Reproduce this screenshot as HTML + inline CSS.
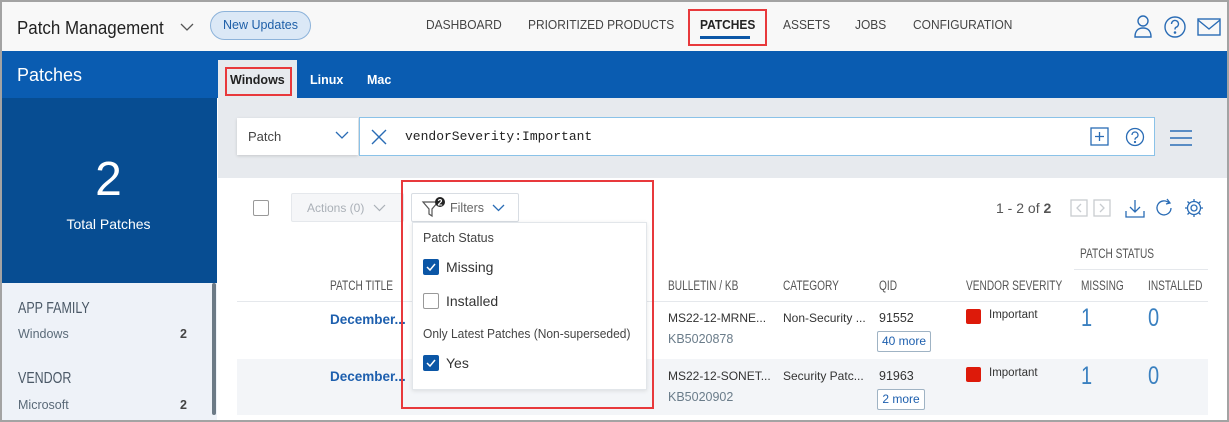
<!DOCTYPE html>
<html><head><meta charset="utf-8"><style>
*{box-sizing:border-box;margin:0;padding:0}
body{width:1229px;height:422px;overflow:hidden;font-family:"Liberation Sans",sans-serif;background:#fff;position:relative;color:#333}
.a{position:absolute}
.nav{font-size:13px;color:#444;top:17px;transform:scaleX(.92);transform-origin:left}
.red{border:2px solid #e8393c}
.cb{width:16px;height:16px;border-radius:2px}
.cbon{background:#0b56a6}
.cboff{border:1.5px solid #999;background:#fff}
.th{font-size:13.5px;color:#555;top:278px;transform:scaleX(.75);transform-origin:left}
.num{font-size:25px;color:#3a80c0;font-weight:300;transform:scaleX(.8);transform-origin:left}
</style></head><body>
<div class="a" style="inset:0;border:2px solid #a3a3a3;z-index:50;pointer-events:none"></div>
<!-- header -->
<div class="a" style="left:0;top:0;width:1229px;height:51px;background:#f8f8f8"></div>
<div class="a" style="left:17px;top:18px;font-size:18px;color:#222;transform:scaleX(.94);transform-origin:left">Patch Management</div>
<svg class="a" style="left:180px;top:23px" width="14" height="9"><path d="M1 1l6 6 6-6" fill="none" stroke="#555" stroke-width="1.3"/></svg>
<div class="a" style="left:210px;top:11px;width:101px;height:29px;border:1px solid #8db3da;border-radius:15px;background:#dbe8f6;color:#1e5fa8;font-size:12.5px;text-align:center;line-height:27px">New Updates</div>
<div class="a nav" style="left:426px">DASHBOARD</div>
<div class="a nav" style="left:528px">PRIORITIZED PRODUCTS</div>
<div class="a nav" style="left:700px;font-weight:bold;color:#222">PATCHES</div>
<div class="a" style="left:700px;top:36px;width:50px;height:3px;background:#0b56a6"></div>
<div class="a red" style="left:688px;top:9px;width:79px;height:37px"></div>
<div class="a nav" style="left:783px">ASSETS</div>
<div class="a nav" style="left:855px">JOBS</div>
<div class="a nav" style="left:913px">CONFIGURATION</div>
<svg class="a" style="left:1130px;top:14px" width="100" height="26" fill="none" stroke="#2a6cb5" stroke-width="1.4">
<circle cx="13" cy="7" r="5"/><path d="M5 23c0-6 3-9 8-9s8 3 8 9z"/>
<circle cx="45" cy="13" r="10"/><path d="M41.5 10a3.5 3.5 0 1 1 4.5 3.3c-1 .4-1 1-1 2.2"/><circle cx="45" cy="18.5" r=".6" fill="#2a6cb5"/>
<rect x="68" y="5" width="22" height="16"/><path d="M68 6l11 9 11-9"/>
</svg>
<!-- blue bar -->
<div class="a" style="left:0;top:51px;width:1229px;height:47px;background:#0a5cb1"></div>
<div class="a" style="left:17px;top:65px;font-size:18px;color:#fff">Patches</div>
<div class="a" style="left:218px;top:60px;width:79px;height:38px;background:#e7eaee"></div>
<div class="a" style="left:230px;top:73px;font-size:12.5px;font-weight:bold;color:#222">Windows</div>
<div class="a red" style="left:225px;top:67px;width:67px;height:29px"></div>
<div class="a" style="left:310px;top:73px;font-size:12.5px;font-weight:bold;color:#fff">Linux</div>
<div class="a" style="left:367px;top:73px;font-size:12.5px;font-weight:bold;color:#fff">Mac</div>
<!-- sidebar -->
<div class="a" style="left:0;top:98px;width:217px;height:185px;background:#074d92"></div>
<div class="a" style="left:0;top:152px;width:217px;text-align:center;font-size:48px;color:#fff">2</div>
<div class="a" style="left:0;top:216px;width:217px;text-align:center;font-size:14px;color:#fff">Total Patches</div>
<div class="a" style="left:0;top:283px;width:217px;height:139px;background:#eef2f8"></div>
<div class="a" style="left:212px;top:283px;width:4px;height:132px;background:#6c7a86;border-radius:2px"></div>
<div class="a" style="left:18px;top:300px;font-size:16px;color:#4a5866;transform:scaleX(.78);transform-origin:left">APP FAMILY</div>
<div class="a" style="left:18px;top:327px;font-size:12.5px;color:#5a6a78">Windows</div>
<div class="a" style="left:180px;top:327px;font-size:12.5px;color:#444;font-weight:bold">2</div>
<div class="a" style="left:18px;top:370px;font-size:16px;color:#4a5866;transform:scaleX(.78);transform-origin:left">VENDOR</div>
<div class="a" style="left:18px;top:398px;font-size:12.5px;color:#5a6a78">Microsoft</div>
<div class="a" style="left:180px;top:398px;font-size:12.5px;color:#444;font-weight:bold">2</div>
<!-- search area -->
<div class="a" style="left:218px;top:98px;width:1011px;height:80px;background:#e7eaee"></div>
<div class="a" style="left:237px;top:118px;width:121px;height:37px;background:#fff;box-shadow:0 1px 3px rgba(0,0,0,.15)"></div>
<div class="a" style="left:248px;top:129px;font-size:13px;color:#444">Patch</div>
<svg class="a" style="left:335px;top:131px" width="14" height="9"><path d="M1 1l6 6 6-6" fill="none" stroke="#2a6cb5" stroke-width="1.3"/></svg>
<div class="a" style="left:359px;top:117px;width:796px;height:39px;background:#fff;border:1.5px solid #8ac2e8"></div>
<svg class="a" style="left:371px;top:129px" width="16" height="16"><path d="M1 1l14 14M15 1L1 15" stroke="#2a6cb5" stroke-width="1.4"/></svg>
<div class="a" style="left:405px;top:129px;font-family:'Liberation Mono',monospace;font-size:13px;color:#222">vendorSeverity:Important</div>
<svg class="a" style="left:1090px;top:127px" width="60" height="20" fill="none" stroke="#2a6cb5" stroke-width="1.3"><rect x="1" y="1" width="17" height="17"/><path d="M9.5 5v9M5 9.5h9"/><circle cx="45" cy="10" r="8.5"/><path d="M42 8a3 3 0 1 1 4 2.8c-.8.4-1 .8-1 2"/><circle cx="45" cy="15" r=".5" fill="#2a6cb5"/></svg>
<svg class="a" style="left:1170px;top:129px" width="22" height="18"><path d="M0 2h22M0 9h22M0 16h22" stroke="#2a6cb5" stroke-width="1.4"/></svg>
<!-- toolbar -->
<div class="a cb cboff" style="left:253px;top:200px"></div>
<div class="a" style="left:291px;top:193px;width:113px;height:29px;background:#f5f6f8;border:1px solid #e5e8ec;border-radius:2px"></div>
<div class="a" style="left:307px;top:201px;font-size:12px;color:#aab0b7">Actions (0)</div>
<svg class="a" style="left:373px;top:204px" width="13" height="8"><path d="M1 1l5.5 5.5L12 1" fill="none" stroke="#aab0b7" stroke-width="1.2"/></svg>
<div class="a" style="left:411px;top:193px;width:108px;height:29px;background:#fff;border:1px solid #d8dde3;border-radius:2px"></div>
<svg class="a" style="left:421px;top:197px" width="26" height="22"><path d="M2 5h15l-6 7v7l-3-2v-5z" fill="none" stroke="#555" stroke-width="1.2"/><circle cx="19" cy="5" r="5" fill="#222"/><text x="19" y="8.5" font-size="9" font-weight="bold" fill="#fff" text-anchor="middle" font-family="Liberation Sans">2</text></svg>
<div class="a" style="left:450px;top:201px;font-size:12.5px;color:#666">Filters</div>
<svg class="a" style="left:492px;top:204px" width="13" height="8"><path d="M1 1l5.5 5.5L12 1" fill="none" stroke="#2a6cb5" stroke-width="1.3"/></svg>
<div class="a" style="left:996px;top:200px;font-size:14px;color:#555">1 - 2 of <b>2</b></div>
<svg class="a" style="left:1070px;top:197px" width="140" height="24" fill="none" stroke-width="1.3">
<rect x="1" y="3" width="16" height="16" stroke="#c8ccd0"/><path d="M11 7l-4 4 4 4" stroke="#c8ccd0"/>
<rect x="24" y="3" width="16" height="16" stroke="#c8ccd0"/><path d="M30 7l4 4-4 4" stroke="#c8ccd0"/>
<path d="M65 3v12M60 10l5 5 5-5M56 14v6h18v-6" stroke="#2a6cb5"/>
<path d="M99 6a7 7 0 1 0 2 5M97 2l3 4-4 1" stroke="#2a6cb5"/>
<circle cx="124" cy="11" r="3" stroke="#2a6cb5"/><path d="M124 2v3M124 17v3M115 11h3M130 11h3M117.5 4.5l2 2M128.5 15.5l2 2M130.5 4.5l-2 2M119.5 15.5l-2 2" stroke="#2a6cb5"/><circle cx="124" cy="11" r="6.5" stroke="#2a6cb5"/>
</svg>
<!-- table header -->
<div class="a" style="left:1080px;top:246px;font-size:13.5px;color:#555;transform:scaleX(.75);transform-origin:left">PATCH STATUS</div>
<div class="a" style="left:1074px;top:269px;width:134px;height:1px;background:#e5e8ec"></div>
<div class="a th" style="left:330px">PATCH TITLE</div>
<div class="a th" style="left:668px">BULLETIN / KB</div>
<div class="a th" style="left:783px">CATEGORY</div>
<div class="a th" style="left:879px">QID</div>
<div class="a th" style="left:966px">VENDOR SEVERITY</div>
<div class="a th" style="left:1081px">MISSING</div>
<div class="a th" style="left:1148px">INSTALLED</div>
<div class="a" style="left:237px;top:301px;width:971px;height:1px;background:#e5e8ec"></div>
<div class="a" style="left:237px;top:359px;width:971px;height:56px;background:#f3f5f8"></div>
<!-- rows -->
<div class="a" style="left:330px;top:312px;font-size:13.5px;font-weight:bold;color:#1d5fae">December...</div>
<div class="a" style="left:330px;top:369px;font-size:13.5px;font-weight:bold;color:#1d5fae">December...</div>
<div class="a" style="left:668px;top:311px;font-size:12px;color:#333">MS22-12-MRNE...</div>
<div class="a" style="left:668px;top:332px;font-size:12.5px;color:#6a7c8a">KB5020878</div>
<div class="a" style="left:668px;top:369px;font-size:12px;color:#333">MS22-12-SONET...</div>
<div class="a" style="left:668px;top:390px;font-size:12.5px;color:#6a7c8a">KB5020902</div>
<div class="a" style="left:783px;top:311px;font-size:12px;color:#333">Non-Security ...</div>
<div class="a" style="left:783px;top:369px;font-size:12px;color:#333">Security Patc...</div>
<div class="a" style="left:879px;top:311px;font-size:12.5px;color:#333">91552</div>
<div class="a" style="left:877px;top:331px;width:54px;height:21px;border:1px solid #9fb3c4;border-radius:2px;background:#fff;font-size:12px;color:#1d5fae;text-align:center;line-height:19px">40 more</div>
<div class="a" style="left:879px;top:369px;font-size:12.5px;color:#333">91963</div>
<div class="a" style="left:877px;top:389px;width:48px;height:21px;border:1px solid #9fb3c4;border-radius:2px;background:#fff;font-size:12px;color:#1d5fae;text-align:center;line-height:19px">2 more</div>
<div class="a" style="left:966px;top:309px;width:15px;height:15px;background:#dd1a0a;border-radius:2px"></div>
<div class="a" style="left:989px;top:309px;font-size:11.5px;color:#333">Important</div>
<div class="a" style="left:966px;top:367px;width:15px;height:15px;background:#dd1a0a;border-radius:2px"></div>
<div class="a" style="left:989px;top:367px;font-size:11.5px;color:#333">Important</div>
<div class="a num" style="left:1081px;top:304px">1</div>
<div class="a num" style="left:1148px;top:304px">0</div>
<div class="a num" style="left:1081px;top:362px">1</div>
<div class="a num" style="left:1148px;top:362px">0</div>
<!-- filter popup -->
<div class="a" style="left:412px;top:222px;width:235px;height:168px;background:#fff;border:1px solid #e2e6ea;box-shadow:0 1px 4px rgba(0,0,0,.1)"></div>
<div class="a" style="left:423px;top:231px;font-size:12.5px;color:#444">Patch Status</div>
<div class="a cb cbon" style="left:423px;top:259px"></div>
<svg class="a" style="left:423px;top:259px" width="16" height="16"><path d="M4 8l3 3 5-6" fill="none" stroke="#fff" stroke-width="1.5"/></svg>
<div class="a" style="left:446px;top:259px;font-size:14px;color:#333">Missing</div>
<div class="a cb cboff" style="left:423px;top:293px"></div>
<div class="a" style="left:446px;top:293px;font-size:14px;color:#333">Installed</div>
<div class="a" style="left:423px;top:327px;font-size:12.5px;color:#444;transform:scaleX(.96);transform-origin:left">Only Latest Patches (Non-superseded)</div>
<div class="a cb cbon" style="left:423px;top:355px"></div>
<svg class="a" style="left:423px;top:355px" width="16" height="16"><path d="M4 8l3 3 5-6" fill="none" stroke="#fff" stroke-width="1.5"/></svg>
<div class="a" style="left:446px;top:355px;font-size:14px;color:#333">Yes</div>
<div class="a red" style="left:401px;top:180px;width:253px;height:229px"></div>
</body></html>
